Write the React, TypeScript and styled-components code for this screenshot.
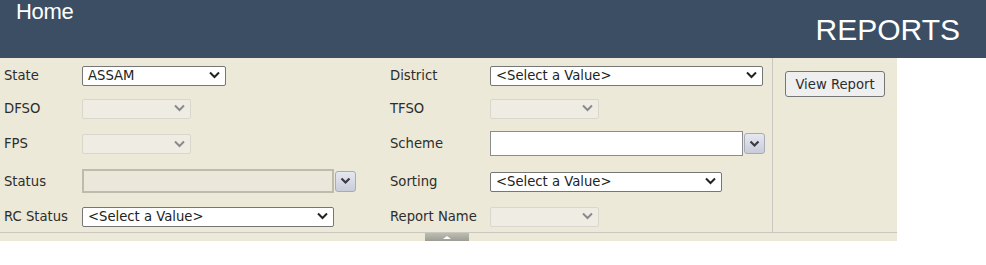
import React from "react";
import styled, { createGlobalStyle } from "styled-components";

const GlobalStyle = createGlobalStyle`
  html, body {
    margin: 0;
    padding: 0;
    background: #ffffff;
  }
  * {
    box-sizing: border-box;
  }
`;

const Page = styled.div`
  width: 986px;
  font-family: "DejaVu Sans", Verdana, sans-serif;
`;

const Header = styled.header`
  height: 58px;
  background: #3b4e63;
  display: flex;
  justify-content: space-between;
  color: #ffffff;
  font-family: "Liberation Sans", Arial, sans-serif;
`;

const HomeLink = styled.div`
  font-size: 22px;
  line-height: 24px;
  padding-left: 16px;
  letter-spacing: -0.3px;
`;

const Title = styled.div`
  font-size: 30px;
  align-self: center;
  padding-right: 26px;
  padding-top: 1px;
`;

const Panel = styled.div`
  width: 897px;
  background: #ece9d8;
`;

const PanelBody = styled.div`
  display: flex;
  border-bottom: 1px solid #c9c7bf;
`;

const FormGrid = styled.div`
  width: 773px;
  border-right: 1px solid #c9c7bf;
  display: grid;
  grid-template-columns: 82px 304px 104px 1fr;
  grid-template-rows: 20px 20px 25px 24px 20px;
  row-gap: 13px;
  align-items: center;
  padding: 7px 0 6px;
`;

const Label = styled.label`
  font-size: 13.2px;
  color: #2d2d2d;
  padding-left: 4px;
  white-space: nowrap;
`;

const Cell = styled.div`
  display: flex;
  align-items: center;
`;

const SelectWrap = styled.div<{ $w: number }>`
  position: relative;
  width: ${(p) => p.$w}px;
  height: 20px;
`;

const Select = styled.select<{ $disabled?: boolean }>`
  appearance: none;
  width: 100%;
  height: 100%;
  margin: 0;
  padding: 0 24px 0 5px;
  font-family: "DejaVu Sans", Verdana, sans-serif;
  font-size: 13.2px;
  color: #222222;
  background: ${(p) => (p.$disabled ? "#f1efe8" : "#ffffff")};
  border: 1px solid ${(p) => (p.$disabled ? "#d2d0c8" : "#767676")};
  border-radius: 2px;
  outline: none;
`;

const Chevron = styled.svg<{ $disabled?: boolean }>`
  position: absolute;
  right: 6px;
  top: 6px;
  width: 11px;
  height: 8px;
  pointer-events: none;
  stroke: ${(p) => (p.$disabled ? "#8a8a8a" : "#222222")};
`;

const TextBox = styled.input<{ $w: number; $h: number; $disabled?: boolean }>`
  width: ${(p) => p.$w}px;
  height: ${(p) => p.$h}px;
  margin: 0;
  padding: 0 4px;
  font-family: "DejaVu Sans", Verdana, sans-serif;
  font-size: 13.2px;
  background: ${(p) => (p.$disabled ? "#ebe8db" : "#ffffff")};
  border: ${(p) => (p.$disabled ? "2px solid #bdbaae" : "1px solid #8c8c8c")};
  border-radius: 0;
  outline: none;
`;

const DropButton = styled.button`
  width: 21px;
  height: 21px;
  margin: 0 0 0 1px;
  padding: 0;
  border: 1px solid #a7aabb;
  border-radius: 3px;
  background: linear-gradient(#e6e8f0, #c9ccd9);
  display: flex;
  align-items: center;
  justify-content: center;
`;

const SideColumn = styled.div`
  flex: 1;
  padding: 13px 0 0 12px;
`;

const ViewButton = styled.button`
  width: 100px;
  height: 26px;
  padding: 0;
  font-family: "DejaVu Sans", Verdana, sans-serif;
  font-size: 13.2px;
  color: #2d2d2d;
  background: #efefef;
  border: 1px solid #767676;
  border-radius: 3px;
`;

const Footer = styled.div`
  height: 8px;
  display: flex;
  justify-content: center;
  padding-right: 4px;
`;

const CollapseTab = styled.div`
  width: 44px;
  height: 8px;
  background: linear-gradient(#bdbdb4, #9d9d95);
  display: flex;
  justify-content: center;
  align-items: center;
`;

const TabArrow = styled.span`
  width: 0;
  height: 0;
  border-left: 4px solid transparent;
  border-right: 4px solid transparent;
  border-bottom: 3px solid #ffffff;
`;

type SelectProps = { width: number; value?: string; disabled?: boolean };

function DropDown({ width, value, disabled }: SelectProps) {
  return (
    <SelectWrap $w={width}>
      <Select $disabled={disabled} disabled={disabled} defaultValue={value}>
        {value ? <option>{value}</option> : <option></option>}
      </Select>
      <Chevron $disabled={disabled} viewBox="0 0 11 8" fill="none" strokeWidth="2">
        <path d="M1 1.5 L5.5 6 L10 1.5" />
      </Chevron>
    </SelectWrap>
  );
}

function ComboButton() {
  return (
    <DropButton type="button">
      <svg width="11" height="8" viewBox="0 0 11 8" fill="none" stroke="#3a3a44" strokeWidth="2.2">
        <path d="M1.5 1.5 L5.5 5.5 L9.5 1.5" />
      </svg>
    </DropButton>
  );
}

export default function App() {
  return (
    <Page>
      <GlobalStyle />
      <Header>
        <HomeLink>Home</HomeLink>
        <Title>REPORTS</Title>
      </Header>
      <Panel>
        <PanelBody>
          <FormGrid>
            <Label>State</Label>
            <Cell>
              <DropDown width={144} value="ASSAM" />
            </Cell>
            <Label>District</Label>
            <Cell>
              <DropDown width={273} value="<Select a Value>" />
            </Cell>

            <Label>DFSO</Label>
            <Cell>
              <DropDown width={109} disabled />
            </Cell>
            <Label>TFSO</Label>
            <Cell>
              <DropDown width={109} disabled />
            </Cell>

            <Label>FPS</Label>
            <Cell>
              <DropDown width={109} disabled />
            </Cell>
            <Label>Scheme</Label>
            <Cell>
              <TextBox $w={253} $h={25} />
              <ComboButton />
            </Cell>

            <Label>Status</Label>
            <Cell>
              <TextBox $w={252} $h={24} $disabled disabled />
              <ComboButton />
            </Cell>
            <Label>Sorting</Label>
            <Cell>
              <DropDown width={232} value="<Select a Value>" />
            </Cell>

            <Label>RC Status</Label>
            <Cell>
              <DropDown width={252} value="<Select a Value>" />
            </Cell>
            <Label>Report Name</Label>
            <Cell>
              <DropDown width={109} disabled />
            </Cell>
          </FormGrid>
          <SideColumn>
            <ViewButton type="button">View Report</ViewButton>
          </SideColumn>
        </PanelBody>
        <Footer>
          <CollapseTab>
            <TabArrow />
          </CollapseTab>
        </Footer>
      </Panel>
    </Page>
  );
}
